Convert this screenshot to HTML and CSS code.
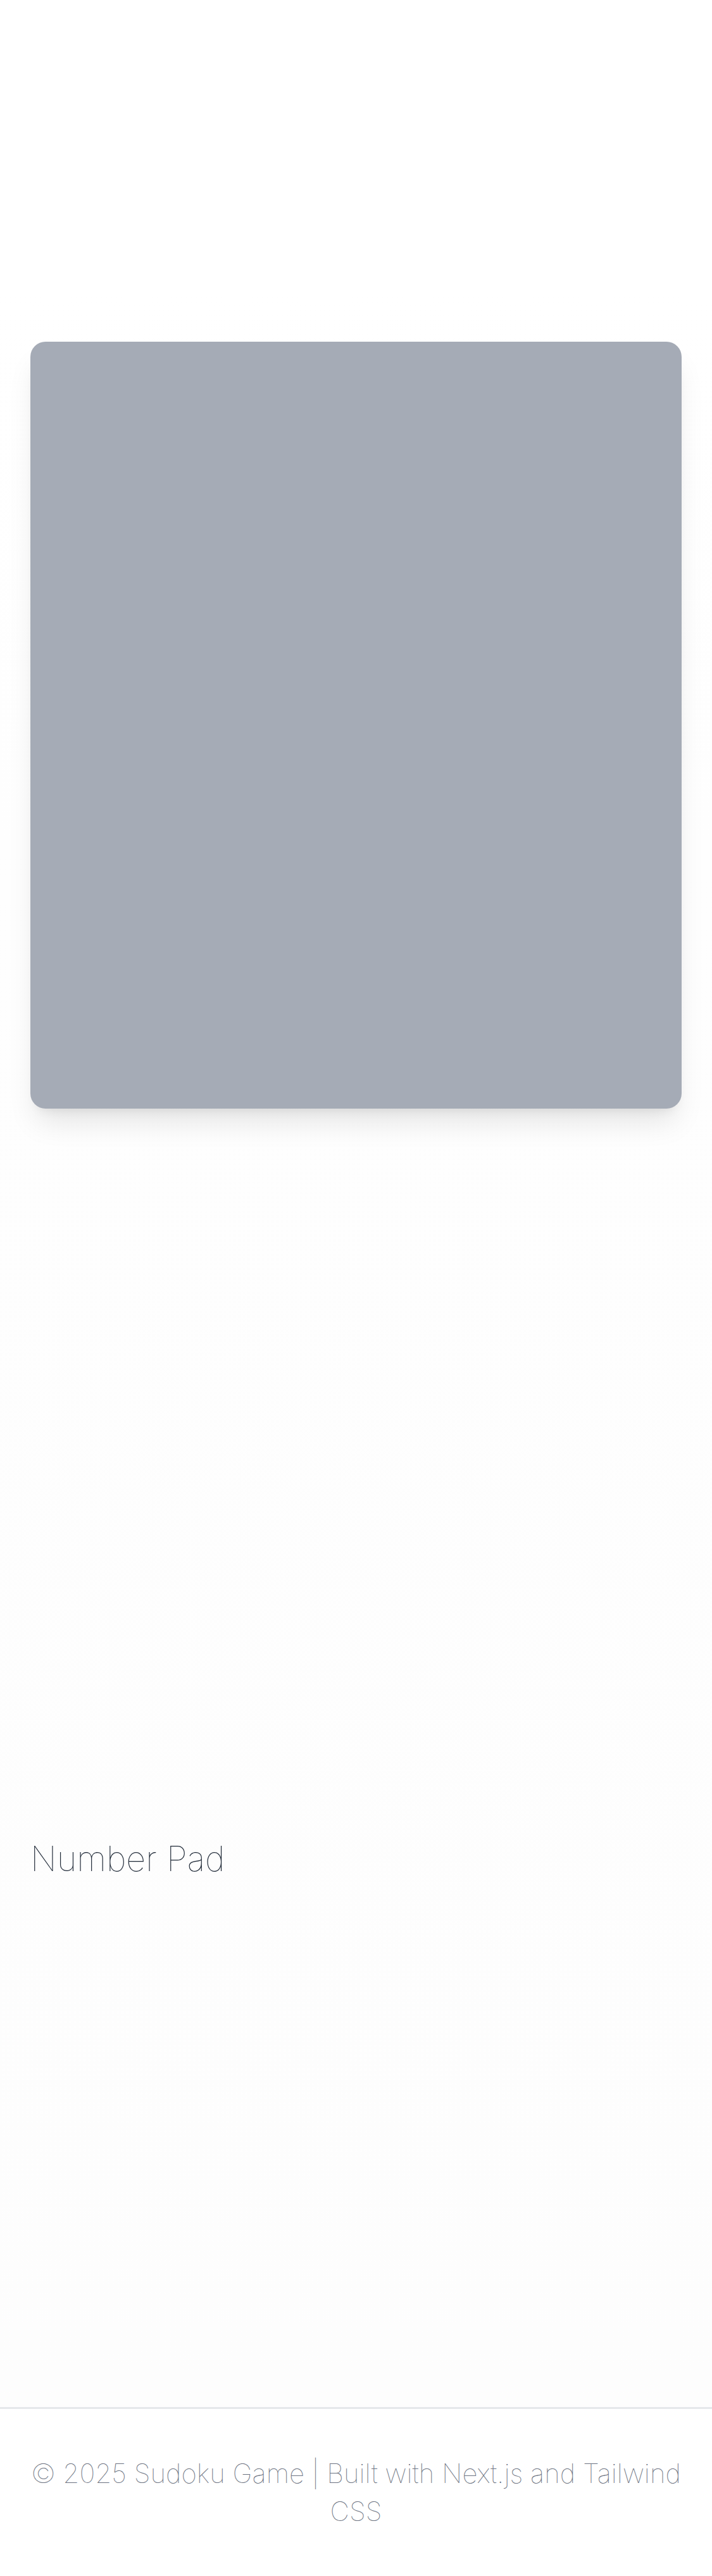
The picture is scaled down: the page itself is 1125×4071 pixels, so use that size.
FILE: index.html
```html
<!DOCTYPE html>
<html lang="en">
<head>
<meta charset="utf-8">
<title>Sudoku Game</title>
<link rel="stylesheet" href="styles.css">
</head>
<body>
<div class="page">
  <main class="main">
    <header class="top-space" aria-hidden="true"></header>
    <section class="board-wrap">
      <div class="board-skeleton"></div>
    </section>
    <section class="controls" aria-hidden="true"></section>
    <section class="number-pad">
      <h2 class="pad-title">Number Pad</h2>
      <div class="pad-grid"></div>
    </section>
  </main>
  <footer class="footer">
    <p class="footer-text">© 2025 Sudoku Game | Built with Next.js and Tailwind CSS</p>
  </footer>
</div>
</body>
</html>
```

FILE: styles.css
```css
* { box-sizing: border-box; }
html, body { margin: 0; padding: 0; }
body {
  background: #ffffff;
  font-family: Inter, "Noto Sans", "Liberation Sans", sans-serif;
  font-weight: 100;
}
.page {
  display: flex;
  flex-direction: column;
  min-height: 4071px;
}
.main {
  flex: 1;
  padding: 0 48px;
  display: flex;
  flex-direction: column;
  background: linear-gradient(#ffffff 0%, #ffffff 12%, #fefefe 35%, #fdfdfd 100%);
}
.top-space { height: 540px; }
.board-wrap { display: flex; }
.board-skeleton {
  flex: 1;
  height: 1212px;
  background: #a5abb6;
  border-radius: 24px;
  box-shadow: 0 30px 45px -9px rgba(0,0,0,0.1), 0 12px 18px -12px rgba(0,0,0,0.1);
}
.controls { height: 1144px; }
.number-pad { display: flex; flex-direction: column; }
.pad-title {
  margin: 0;
  font-size: 54px;
  line-height: 84px;
  font-weight: 100;
  color: #1f2937;
}
.pad-grid { height: 824px; }
.footer {
  border-top: 3px solid #e5e7eb;
  background: #ffffff;
  padding: 72px 48px;
}
.footer-text {
  margin: 0;
  text-align: center;
  font-size: 42px;
  line-height: 60px;
  font-weight: 100;
  color: #6b7280;
}
```
